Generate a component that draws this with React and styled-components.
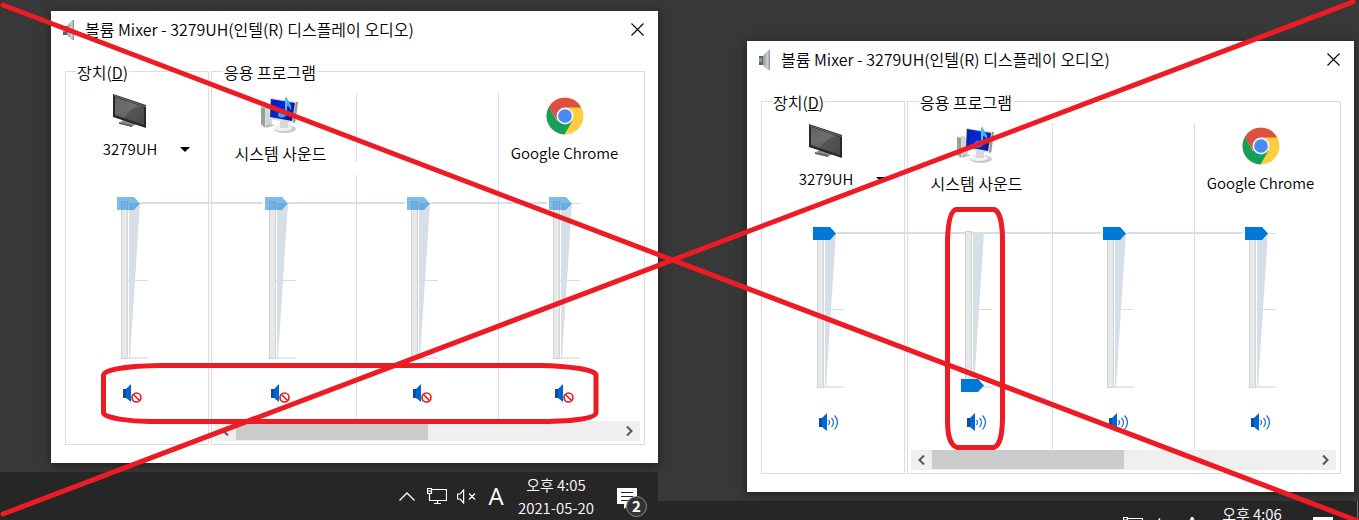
import React, { useState } from 'react';
import styled, { createGlobalStyle } from 'styled-components';

const GlobalStyle = createGlobalStyle`
  * { box-sizing: border-box; }
  body {
    margin: 0;
    background: #383838;
    color: #000;
    font: 350 15px/20px "Noto Sans CJK KR", "Noto Sans", sans-serif;
  }
  button { font: inherit; color: inherit; border: 0; padding: 0; background: none; }
  svg { display: block; }
`;

const Page = styled.main`
  position: relative;
  display: grid;
  grid-template-columns: 658fr 701fr;
  height: 100vh;
  overflow: hidden;
`;

const Desktop = styled.section`
  display: flex;
  flex-direction: column;
  gap: 9px;
  min-width: 0;
  padding-top: ${(p) => p.$top}px;
`;

const Dialog = styled.article`
  margin: 0 ${(p) => p.$right}px 0 ${(p) => p.$left}px;
  padding-bottom: 18px;
  background: #fff;
  box-shadow: 0 2px 9px rgba(0, 0, 0, 0.5);
`;

const TitleBar = styled.header`
  display: flex;
  align-items: center;
  gap: 10px;
  height: 37px;
  padding: 0 14px 0 11px;
`;

const Title = styled.h1`
  flex: 1;
  margin: 0;
  padding-bottom: 2px;
  font-size: 16px;
  font-weight: inherit;
  line-height: 18px;
  white-space: nowrap;
`;

const Groups = styled.div`
  display: flex;
  gap: 2px;
  padding: 14px 13px 0 14px;
`;

const Group = styled.fieldset`
  flex: ${(p) => (p.$fixed ? '0 0 144px' : '1 1 0')};
  min-width: 0;
  margin: 0;
  padding: ${(p) => (p.$fixed ? '12px 0 0' : '12px 4px 3px 2px')};
  border: 1px solid #dcdcdc;
`;

const Legend = styled.legend`
  height: 19px;
  margin-left: ${(p) => p.$indent}px;
  padding: 0 1px;
  font-size: 16px;
  line-height: 20px;
`;

const Channels = styled.div`
  display: grid;
  grid-template-columns: repeat(3, 1fr);
`;

const separators = {
  none: 'none',
  full: 'linear-gradient(#d6dfe8, #d6dfe8)',
  broken: 'linear-gradient(#d6dfe8 69px, transparent 69px 82px, #d6dfe8 82px)',
};

const Channel = styled.div`
  position: relative;
  display: flex;
  flex-direction: column;
  align-items: center;
  padding: 0 9px 17px 0;
  background: ${(p) => separators[p.$separator]} 0 0 / 1px 100% no-repeat;
`;

const LevelLine = styled.span`
  position: absolute;
  top: 109px;
  height: 2px;
  background: #d6dfe8;
  ${(p) => {
    if (p.$side === 'left') return 'left: 0; right: calc(50% + 22px);';
    if (p.$side === 'full') return 'left: 0; right: 0;';
    return `left: calc(50% + 4px); right: ${p.$reach}px;`;
  }}
`;

const ChannelHead = styled.div`
  display: flex;
  flex-direction: column;
  align-items: center;
  gap: 8px;
  height: 104px;
  font-size: ${(p) => (p.$korean ? 16 : 15)}px;
  white-space: nowrap;
`;

const IconSlot = styled.div`
  display: flex;
  align-items: flex-end;
  height: 42px;
`;

const DevicePicker = styled.button`
  display: grid;
  grid-template-columns: 1fr auto 1fr;
  align-content: start;
  justify-items: center;
  align-items: center;
  row-gap: 8px;
  width: 100%;
  height: 104px;
  padding-right: 5px;

  & > :first-child { grid-column: 1 / -1; }
  & > :nth-child(2) { grid-column: 2; }
  & > :last-child { justify-self: start; margin-left: 23px; }
`;

const SliderBox = styled.div`
  position: relative;
  z-index: 1;
  display: grid;
  width: 31px;
  height: ${(p) => p.$height}px;
  & > * { grid-area: 1 / 1; }
`;

const Range = styled.input`
  appearance: none;
  writing-mode: vertical-lr;
  direction: rtl;
  width: 23px;
  height: 100%;
  margin: 0;
  background: transparent;
  z-index: 1;

  &::-webkit-slider-runnable-track { width: 23px; height: 100%; background: transparent; }
  &::-webkit-slider-thumb {
    appearance: none;
    width: 23px;
    height: 13px;
    border: 0;
    border-radius: 0;
    background: ${(p) => (p.$muted ? 'rgba(0, 120, 215, 0.5)' : '#0078d7')};
    clip-path: polygon(0 0, 17px 0, 23px 50%, 17px 100%, 0 100%);
  }
`;

const MuteButton = styled.button`
  margin-top: 21px;
`;

const ScrollBar = styled.div`
  display: flex;
  height: 20px;
  margin: 1px 0 0 1px;
  background: #efefef;
`;

const ScrollArrow = styled.button`
  display: grid;
  place-items: center;
  width: 21px;
`;

const ScrollTrack = styled.div`
  flex: 1;
`;

const ScrollThumb = styled.div`
  width: 50%;
  height: 19px;
  background: #cbcbcb;
`;

const TaskBar = styled.footer`
  display: flex;
  flex: none;
  align-items: center;
  justify-content: flex-end;
  height: 48px;
  padding-right: ${(p) => (p.$edge ? 15 : 11)}px;
  background: #262626;
  color: #fff;
  ${(p) => p.$edge && 'border-right: 1px solid #262626; box-shadow: inset -1px 0 #777;'}
`;

const TrayButton = styled.button`
  margin-right: ${(p) => p.$gap}px;
`;

const InputMode = styled(TrayButton)`
  width: 16px;
  font: 24px/28px "Open Sans", sans-serif;
`;

const Clock = styled.time`
  width: 78px;
  margin-right: 22px;
  line-height: 23px;
  text-align: center;
  white-space: nowrap;
`;

const Notice = styled.button`
  position: relative;
  width: 30px;
  height: 31px;
  margin-top: 10px;
`;

const NoticeIcon = styled.svg`
  margin-top: -5px;
`;

const Badge = styled.span`
  position: absolute;
  right: 0;
  bottom: 0;
  width: 21px;
  height: 21px;
  border: 1px solid #8c8c8c;
  border-radius: 50%;
  background: #333;
  font-weight: 700;
  line-height: 18px;
  text-align: center;
`;

const Markup = styled.svg`
  position: absolute;
  inset: 0;
  width: 100%;
  height: 100%;
  pointer-events: none;
  z-index: 3;
`;

const DialogIcon = () => (
  <svg width="13" height="20" viewBox="0 0 13 20">
    <defs>
      <linearGradient id="cone" x1="0" x2="1">
        <stop offset="0" stopColor="#737a80" />
        <stop offset=".5" stopColor="#a3aaaf" />
        <stop offset=".8" stopColor="#cdd2d6" />
        <stop offset="1" stopColor="#80878d" />
      </linearGradient>
    </defs>
    <path d="M1 6h4l5-6h2v20h-2l-5-5H1z" fill="url(#cone)" />
    <path d="M1 6h4v9H1z" fill="#5c6369" />
    <path d="M1 8h3v4H1z" fill="#8e959b" />
  </svg>
);

const CloseIcon = () => (
  <svg width="13" height="13" viewBox="0 0 13 13" stroke="#000" strokeWidth="1.1">
    <path d="M.5.5l12 12M12.5.5l-12 12" />
  </svg>
);

const TvIcon = () => (
  <svg width="34" height="38" viewBox="0 0 34 38">
    <defs>
      <linearGradient id="screen" x1="0" y1="0" x2="1" y2="1">
        <stop offset="0" stopColor="#555" />
        <stop offset=".5" stopColor="#686868" />
        <stop offset=".52" stopColor="#545454" />
        <stop offset="1" stopColor="#4a4a4a" />
      </linearGradient>
    </defs>
    <path d="M7 29l6-3 10 3 1 2-6 3z" fill="#8b9196" />
    <path d="M6 29l13 3v2L6 31z" fill="#5d6469" />
    <path d="M0 1l33 11v23L0 24z" fill="#26282a" />
    <path d="M1 2l32 11v1L1 3z" fill="#777" />
    <path d="M2 4l29 10v18L2 22z" fill="url(#screen)" />
    <path d="M2 22L29 13 2 4z" fill="#777" opacity=".45" />
  </svg>
);

const SystemIcon = () => (
  <svg width="40" height="38" viewBox="0 0 40 38">
    <defs>
      <linearGradient id="sysScreen" x1="0" x2="1" y2=".3">
        <stop offset="0" stopColor="#0a1c9c" />
        <stop offset=".5" stopColor="#0527dd" />
        <stop offset="1" stopColor="#0a1a9e" />
      </linearGradient>
    </defs>
    <path d="M1 10l6-1 5 2v18l-8 2-3-3z" fill="#d4d5d5" />
    <path d="M1 10l4 1v19l-4-3z" fill="#9d9f9f" />
    <path d="M2 13h2v3H2z" fill="#4ecb35" />
    <path d="M10 26l-4 4 8-2" fill="none" stroke="#aaa" />
    <ellipse cx="25" cy="32" rx="11" ry="4" fill="#c9caca" />
    <ellipse cx="23" cy="31" rx="9" ry="3" fill="#f1f1f1" />
    <path d="M20 24h8v7h-8z" fill="#d6d8d9" />
    <path d="M10 1l28 4-3 21-26-4z" fill="#d9dbdc" />
    <path d="M38 5l-3 21-2-1 3-20z" fill="#8f9496" />
    <path d="M11 2l24 4-3 18-22-4z" fill="url(#sysScreen)" />
    <path d="M27 0c0 5 6 6 4 14-1-4-3-5-4-5v8c-1 4-8 5-9 1 0-4 5-5 7-4V1z" fill="#37a8f2" />
    <path d="M26 1v16" stroke="#7acbff" />
  </svg>
);

const ChromeIcon = () => (
  <svg width="38" height="38" viewBox="0 0 38 38">
    <circle cx="19" cy="19" r="18.5" fill="#ffcd40" />
    <path d="M3 9.800A18.500 18.500 0 0 0 18.500 37.500L26.500 23.500H19l-8.500 0z" fill="#159f5b" />
    <path d="M3 9.800l8.400 13.500L19 10.500z" fill="#159f5b" />
    <path d="M3 9.800A18.500 18.500 0 0 1 35.200 10.500H19l-7.500 5-1 7z" fill="#dd4f43" />
    <circle cx="19" cy="19" r="8.500" fill="#f4f4f4" />
    <circle cx="19" cy="19" r="6.800" fill="#4a8af4" />
  </svg>
);

const SpeakerIcon = ({ muted }) => (
  <svg width="19" height="19" viewBox="0 0 19 19" fill="none">
    <path d="M3 5l5-5v18l-5-4z" fill="#0067d1" />
    <path d="M0 5h3v9H0z" fill="#0c4da2" />
    {muted ? (
      <g stroke="#e01b1b" strokeWidth="1.600">
        <circle cx="13.500" cy="13.500" r="4.500" />
        <path d="M10.500 10.500l6 6" />
      </g>
    ) : (
      <g stroke="#1874cf" strokeWidth="1.200">
        <path d="M9.500 7q2 2 0 5M12.500 5q4 4.500 0 9M15.500 2.500q6 6.500 0 14" />
      </g>
    )}
  </svg>
);

const Scale = ({ height }) => (
  <svg width="31" height={height} viewBox={`0 0 31 ${height}`}>
    <path
      d={`M11 6.500h20M11 ${Math.floor(height / 2)}.500h20`}
      stroke="#dcdcdc"
    />
    <path d={`M11 ${height - 5}h20`} stroke="#e8e8e8" strokeWidth="2" />
    <path d={`M12 6h11l-10 ${height - 11}h-1z`} fill="#d6dfe8" />
    <rect x="4.5" y="4.5" width="6" height={height - 9} fill="#e6e9e9" stroke="#d2d2d2" />
  </svg>
);

const Volume = ({ name, initial, muted: startMuted, height }) => {
  const [level, setLevel] = useState(initial);
  const [muted, setMuted] = useState(startMuted);
  return (
    <>
      <SliderBox $height={height}>
        <Scale height={height} />
        <Range
          type="range"
          min="0"
          max="100"
          value={level}
          $muted={muted}
          aria-label={name}
          onChange={(e) => setLevel(Number(e.target.value))}
        />
      </SliderBox>
      <MuteButton type="button" aria-label={name} aria-pressed={muted} onClick={() => setMuted(!muted)}>
        <SpeakerIcon muted={muted} />
      </MuteButton>
    </>
  );
};

const Mixer = ({ left, right, muted, systemLevel, height, brokenSeparator }) => {
  const apps = [
    { name: '시스템 사운드', korean: true, icon: <SystemIcon />, level: systemLevel, separator: 'none' },
    { name: '', level: 100, separator: brokenSeparator ? 'broken' : 'full' },
    { name: 'Google Chrome', icon: <ChromeIcon />, level: 100, separator: 'full' },
  ];
  return (
    <Dialog $left={left} $right={right}>
      <TitleBar>
        <DialogIcon />
        <Title>볼륨 Mixer - 3279UH(인텔(R) 디스플레이 오디오)</Title>
        <button type="button" aria-label="닫기"><CloseIcon /></button>
      </TitleBar>
      <Groups>
        <Group $fixed>
          <Legend $indent={10}>장치(<u>D</u>)</Legend>
          <Channel $separator="none">
            <DevicePicker type="button">
              <TvIcon />
              <span>3279UH</span>
              <svg width="10" height="5" viewBox="0 0 10 5"><path d="M0 0h10L5 5z" /></svg>
            </DevicePicker>
            <Volume name="3279UH" initial={100} muted={muted} height={height} />
            <LevelLine $side="right" $reach={-6} />
          </Channel>
        </Group>
        <Group>
          <Legend $indent={9}>응용 프로그램</Legend>
          <Channels>
            {apps.map((app, i) => (
              <Channel key={i} $separator={app.separator}>
                <LevelLine $side={app.level < 100 ? 'full' : 'left'} />
                <ChannelHead $korean={app.korean}>
                  <IconSlot>{app.icon}</IconSlot>
                  <span>{app.name}</span>
                </ChannelHead>
                <Volume name={app.name || '앱'} initial={app.level} muted={muted} height={height} />
                {i < 2 && <LevelLine $side="right" $reach={0} />}
              </Channel>
            ))}
          </Channels>
          <ScrollBar>
            <ScrollArrow type="button" aria-label="왼쪽">
              <svg width="8" height="10" viewBox="0 0 8 10" fill="none" stroke="#555" strokeWidth="2"><path d="M6 .5L1.500 5 6 9.500" /></svg>
            </ScrollArrow>
            <ScrollTrack><ScrollThumb /></ScrollTrack>
            <ScrollArrow type="button" aria-label="오른쪽">
              <svg width="8" height="10" viewBox="0 0 8 10" fill="none" stroke="#555" strokeWidth="2"><path d="M1 .5L5.500 5 1 9.500" /></svg>
            </ScrollArrow>
          </ScrollBar>
        </Group>
      </Groups>
    </Dialog>
  );
};

const Tray = ({ time, edge }) => (
  <TaskBar $edge={edge}>
    <TrayButton type="button" $gap={12} aria-label="숨겨진 아이콘">
      <svg width="16" height="9" viewBox="0 0 16 9" fill="none" stroke="#fff" strokeWidth="1.300"><path d="M.5 8.500L8 1l7.500 7.500" /></svg>
    </TrayButton>
    <TrayButton type="button" $gap={10} aria-label="네트워크">
      <svg width="20" height="17" viewBox="0 0 20 17" fill="none" stroke="#fff" strokeWidth="1.200">
        <path d="M5 1.500h14.500v11H2.500V6M7 15.500h7M10.500 12.500v3M.5.500h4v5h-4zM1 3h3" />
      </svg>
    </TrayButton>
    <TrayButton type="button" $gap={12} aria-label="음소거">
      <svg width="19" height="15" viewBox="0 0 19 15" fill="none" stroke="#fff" strokeWidth="1.200">
        <path d="M.6 5h2.500l3.500-4v13l-3.500-4H.6zM12 4.500l6 6M18 4.500l-6 6" />
      </svg>
    </TrayButton>
    <InputMode type="button" $gap={13}>A</InputMode>
    <Clock>오후 {time}<br />2021-05-20</Clock>
    <Notice type="button">
      <NoticeIcon width="20" height="22" viewBox="0 0 20 22">
        <path d="M0 0h20v16h-8l-5 5v-5H0z" fill="#fff" />
        <path d="M4 4.500h12M4 8.500h12M4 12.500h8" stroke="#262626" />
      </NoticeIcon>
      <Badge>2</Badge>
    </Notice>
  </TaskBar>
);

export default function App() {
  return (
    <>
      <GlobalStyle />
      <Page>
        <Desktop $top={11}>
          <Mixer left={51} right={0} muted systemLevel={100} height={166} brokenSeparator />
          <Tray time="4:05" />
        </Desktop>
        <Desktop $top={41}>
          <Mixer left={89} right={5} muted={false} systemLevel={0} height={165} />
          <Tray time="4:06" edge />
        </Desktop>
        <Markup
          viewBox="0 0 1359 520"
          preserveAspectRatio="none"
          fill="none"
          stroke="#ed1c24"
          strokeWidth="5"
          strokeLinecap="round"
          aria-hidden="true"
        >
          <path d="M3 5L1358 521M3 514L1353 2" />
          <path d="M160 365.500C130 366 104 369 103.500 375V413C104 418 130 421.500 150 421.500H548C570 421 596 419 596 413V375C596 370 570 366 540 365.500Z" />
          <path d="M956 209.500H994C1000 211 1002.500 225 1002.500 240V420C1002 436 1000 445 994 447.500H957C950 445 947.500 436 947.500 420V240C948 225 950 211 956 209.500Z" />
        </Markup>
      </Page>
    </>
  );
}
